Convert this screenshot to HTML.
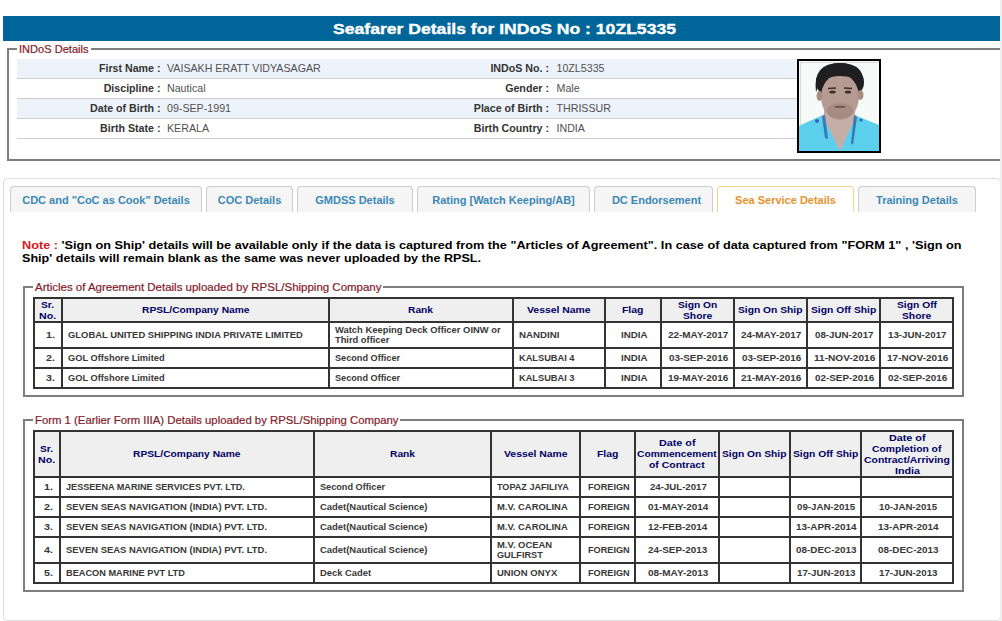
<!DOCTYPE html>
<html><head><meta charset="utf-8"><title>Seafarer Details</title>
<style>
html,body{margin:0;padding:0;background:#fff;}
body{width:1002px;height:621px;overflow:hidden;position:relative;font-family:"Liberation Sans", sans-serif;}
.a{position:absolute;}
.t{position:absolute;white-space:nowrap;transform-origin:0 0;}
</style></head><body>
<div class="a" style="left:3px;top:16px;width:997px;height:25px;background:#006699;"></div><div class="a" style="left:7px;top:48px;width:1000px;height:113px;border:2px solid #7d7d7d;box-sizing:border-box;"></div><div class="a" style="left:17px;top:46px;width:74px;height:6px;background:#fff;"></div><div class="a" style="left:17px;top:59px;width:780px;height:19px;background:#eef3fb;"></div><div class="a" style="left:17px;top:78px;width:780px;height:1px;background:#cdcdcd;"></div><div class="a" style="left:17px;top:98px;width:780px;height:1px;background:#cdcdcd;"></div><div class="a" style="left:17px;top:99px;width:780px;height:19px;background:#eef3fb;"></div><div class="a" style="left:17px;top:118px;width:780px;height:1px;background:#cdcdcd;"></div><div class="a" style="left:17px;top:138px;width:780px;height:1px;background:#cdcdcd;"></div><svg class="a" style="left:797px;top:59px" width="84" height="94" viewBox="0 0 84 94">
<rect x="0" y="0" width="84" height="94" fill="#000"/>
<rect x="2" y="2" width="80" height="90" fill="#f6fbf9"/>
<rect x="3" y="3" width="1" height="88" fill="#d5dcda"/>
<rect x="3" y="3" width="78" height="1" fill="#d5dcda"/>
<path d="M2 92 L2 67 Q12 62 24 57 L28 55 L57 55 L60 57 Q72 62 82 66 L82 92 Z" fill="#5ccfec"/>
<path d="M27 42 L58 42 L58 60 L43 92 L27 60 Z" fill="#c4aea7"/>
<ellipse cx="43" cy="23" rx="24" ry="19" fill="#1f1f22"/>
<ellipse cx="43" cy="38" rx="19" ry="23" fill="#b59b91"/>
<ellipse cx="22.5" cy="37" rx="3" ry="5" fill="#a88c82"/>
<ellipse cx="63.5" cy="36" rx="3" ry="5" fill="#a88c82"/>
<ellipse cx="43" cy="52" rx="13" ry="8" fill="#8a6f67" opacity="0.35"/>
<path d="M19 33 Q15 4 43 4 Q70 4 66 30 Q61 17 43 17 Q25 17 19 33 Z" fill="#1f1f22"/>
<path d="M25 57 L28 56 L31 80 L28 79 Z" fill="#1b3f9a" opacity="0.6"/>
<path d="M57 56 L60 58 L56 86 L54 84 Z" fill="#1b3f9a" opacity="0.6"/>
<circle cx="20" cy="62" r="2" fill="#2d49b0" opacity="0.8"/>
<circle cx="64" cy="61" r="1.6" fill="#2d49b0" opacity="0.8"/>
<ellipse cx="35.5" cy="33" rx="3.2" ry="1.5" fill="#3d2f2c"/>
<ellipse cx="51" cy="33" rx="3.2" ry="1.5" fill="#3d2f2c"/>
<path d="M31 29.5 L39 29 M47 29 L55 29.5" stroke="#3d2f2c" stroke-width="1.3"/>
<rect x="38" y="47" width="10" height="1.6" fill="#6a4d47"/>
</svg><div class="a" style="left:3px;top:178px;width:998px;height:443px;border:1px solid #dddddd;border-radius:4px;box-sizing:border-box;"></div><div class="a" style="left:10px;top:186px;width:192px;height:26px;background:#f5f5f5;border:1px solid #cccccc;border-bottom:none;border-radius:4px 4px 0 0;box-sizing:border-box;"></div><div class="a" style="left:206px;top:186px;width:87px;height:26px;background:#f5f5f5;border:1px solid #cccccc;border-bottom:none;border-radius:4px 4px 0 0;box-sizing:border-box;"></div><div class="a" style="left:297px;top:186px;width:116px;height:26px;background:#f5f5f5;border:1px solid #cccccc;border-bottom:none;border-radius:4px 4px 0 0;box-sizing:border-box;"></div><div class="a" style="left:417px;top:186px;width:173px;height:26px;background:#f5f5f5;border:1px solid #cccccc;border-bottom:none;border-radius:4px 4px 0 0;box-sizing:border-box;"></div><div class="a" style="left:594px;top:186px;width:119px;height:26px;background:#f5f5f5;border:1px solid #cccccc;border-bottom:none;border-radius:4px 4px 0 0;box-sizing:border-box;"></div><div class="a" style="left:717px;top:186px;width:137px;height:26px;background:#ffffff;border:1px solid #f0d58a;border-bottom:none;border-radius:4px 4px 0 0;box-sizing:border-box;"></div><div class="a" style="left:858px;top:186px;width:118px;height:26px;background:#f5f5f5;border:1px solid #cccccc;border-bottom:none;border-radius:4px 4px 0 0;box-sizing:border-box;"></div><div class="a" style="left:23px;top:286px;width:941px;height:111px;border:2px solid #7d7d7d;box-sizing:border-box;"></div><div class="a" style="left:33px;top:284px;width:350px;height:6px;background:#fff;"></div><div class="a" style="left:33px;top:297px;width:921px;height:24px;background:#efefef;"></div><div class="a" style="left:33px;top:297px;width:2px;height:92px;background:#333333;"></div><div class="a" style="left:61px;top:297px;width:2px;height:92px;background:#333333;"></div><div class="a" style="left:328px;top:297px;width:2px;height:92px;background:#333333;"></div><div class="a" style="left:512px;top:297px;width:2px;height:92px;background:#333333;"></div><div class="a" style="left:604px;top:297px;width:2px;height:92px;background:#333333;"></div><div class="a" style="left:660px;top:297px;width:2px;height:92px;background:#333333;"></div><div class="a" style="left:733px;top:297px;width:2px;height:92px;background:#333333;"></div><div class="a" style="left:806px;top:297px;width:2px;height:92px;background:#333333;"></div><div class="a" style="left:879px;top:297px;width:2px;height:92px;background:#333333;"></div><div class="a" style="left:952px;top:297px;width:2px;height:92px;background:#333333;"></div><div class="a" style="left:33px;top:297px;width:921px;height:2px;background:#333333;"></div><div class="a" style="left:33px;top:321px;width:921px;height:2px;background:#333333;"></div><div class="a" style="left:33px;top:347px;width:921px;height:2px;background:#333333;"></div><div class="a" style="left:33px;top:367px;width:921px;height:2px;background:#333333;"></div><div class="a" style="left:33px;top:387px;width:921px;height:2px;background:#333333;"></div><div class="a" style="left:23px;top:419px;width:941px;height:173px;border:2px solid #7d7d7d;box-sizing:border-box;"></div><div class="a" style="left:33px;top:417px;width:367px;height:6px;background:#fff;"></div><div class="a" style="left:33px;top:430px;width:921px;height:46px;background:#efefef;"></div><div class="a" style="left:33px;top:430px;width:2px;height:154px;background:#333333;"></div><div class="a" style="left:59px;top:430px;width:2px;height:154px;background:#333333;"></div><div class="a" style="left:313px;top:430px;width:2px;height:154px;background:#333333;"></div><div class="a" style="left:490px;top:430px;width:2px;height:154px;background:#333333;"></div><div class="a" style="left:579px;top:430px;width:2px;height:154px;background:#333333;"></div><div class="a" style="left:634px;top:430px;width:2px;height:154px;background:#333333;"></div><div class="a" style="left:718px;top:430px;width:2px;height:154px;background:#333333;"></div><div class="a" style="left:789px;top:430px;width:2px;height:154px;background:#333333;"></div><div class="a" style="left:860px;top:430px;width:2px;height:154px;background:#333333;"></div><div class="a" style="left:952px;top:430px;width:2px;height:154px;background:#333333;"></div><div class="a" style="left:33px;top:430px;width:921px;height:2px;background:#333333;"></div><div class="a" style="left:33px;top:476px;width:921px;height:2px;background:#333333;"></div><div class="a" style="left:33px;top:496px;width:921px;height:2px;background:#333333;"></div><div class="a" style="left:33px;top:516px;width:921px;height:2px;background:#333333;"></div><div class="a" style="left:33px;top:536px;width:921px;height:2px;background:#333333;"></div><div class="a" style="left:33px;top:562px;width:921px;height:2px;background:#333333;"></div><div class="a" style="left:33px;top:582px;width:921px;height:2px;background:#333333;"></div><div class="a" style="left:1000px;top:0px;width:2px;height:621px;background:#efefef;"></div>
<div class="t" style="left:333.00px;top:20.80px;font-size:15px;line-height:15px;font-weight:bold;color:#fff;transform:scaleX(1.1722);"><span style="-webkit-text-stroke:0.35px #fff">Seafarer Details for INDoS No : 10ZL5335</span></div><div class="t" style="left:19.00px;top:44.29px;font-size:11px;line-height:11px;font-weight:normal;color:#851a2b;transform:scaleX(1.0061);"><span style="-webkit-text-stroke:0.2px #851a2b">INDoS Details</span></div><div class="t" style="left:98.91px;top:62.97px;font-size:10.67px;line-height:10.67px;font-weight:bold;color:#333;">First Name :</div><div class="t" style="left:167.00px;top:62.97px;font-size:10.67px;line-height:10.67px;font-weight:normal;color:#505050;">VAISAKH ERATT VIDYASAGAR</div><div class="t" style="left:490.39px;top:62.97px;font-size:10.67px;line-height:10.67px;font-weight:bold;color:#333;">INDoS No. :</div><div class="t" style="left:556.50px;top:62.97px;font-size:10.67px;line-height:10.67px;font-weight:normal;color:#505050;">10ZL5335</div><div class="t" style="left:103.64px;top:82.97px;font-size:10.67px;line-height:10.67px;font-weight:bold;color:#333;">Discipline :</div><div class="t" style="left:167.00px;top:82.97px;font-size:10.67px;line-height:10.67px;font-weight:normal;color:#505050;">Nautical</div><div class="t" style="left:505.17px;top:82.97px;font-size:10.67px;line-height:10.67px;font-weight:bold;color:#333;">Gender :</div><div class="t" style="left:556.50px;top:82.97px;font-size:10.67px;line-height:10.67px;font-weight:normal;color:#505050;">Male</div><div class="t" style="left:90.05px;top:102.97px;font-size:10.67px;line-height:10.67px;font-weight:bold;color:#333;">Date of Birth :</div><div class="t" style="left:167.00px;top:102.97px;font-size:10.67px;line-height:10.67px;font-weight:normal;color:#505050;">09-SEP-1991</div><div class="t" style="left:473.80px;top:102.97px;font-size:10.67px;line-height:10.67px;font-weight:bold;color:#333;">Place of Birth :</div><div class="t" style="left:556.50px;top:102.97px;font-size:10.67px;line-height:10.67px;font-weight:normal;color:#505050;">THRISSUR</div><div class="t" style="left:100.11px;top:122.97px;font-size:10.67px;line-height:10.67px;font-weight:bold;color:#333;">Birth State :</div><div class="t" style="left:167.00px;top:122.97px;font-size:10.67px;line-height:10.67px;font-weight:normal;color:#505050;">KERALA</div><div class="t" style="left:473.81px;top:122.97px;font-size:10.67px;line-height:10.67px;font-weight:bold;color:#333;">Birth Country :</div><div class="t" style="left:556.50px;top:122.97px;font-size:10.67px;line-height:10.67px;font-weight:normal;color:#505050;">INDIA</div><div class="t" style="left:22.24px;top:194.69px;font-size:11px;line-height:11px;font-weight:bold;color:#3b88b8;">CDC and "CoC as Cook" Details</div><div class="t" style="left:217.71px;top:194.69px;font-size:11px;line-height:11px;font-weight:bold;color:#3b88b8;">COC Details</div><div class="t" style="left:315.27px;top:194.69px;font-size:11px;line-height:11px;font-weight:bold;color:#3b88b8;">GMDSS Details</div><div class="t" style="left:432.20px;top:194.69px;font-size:11px;line-height:11px;font-weight:bold;color:#3b88b8;">Rating [Watch Keeping/AB]</div><div class="t" style="left:611.88px;top:194.69px;font-size:11px;line-height:11px;font-weight:bold;color:#3b88b8;">DC Endorsement</div><div class="t" style="left:735.05px;top:194.69px;font-size:11px;line-height:11px;font-weight:bold;color:#e8922e;">Sea Service Details</div><div class="t" style="left:876.04px;top:194.69px;font-size:11px;line-height:11px;font-weight:bold;color:#3b88b8;">Training Details</div><div class="t" style="left:21.50px;top:239.69px;font-size:11px;line-height:11px;font-weight:bold;color:#000;transform:scaleX(1.1537);"><span style="color:#e0141e">Note : </span>'Sign on Ship' details will be available only if the data is captured from the "Articles of Agreement". In case of data captured from "FORM 1" , 'Sign on</div><div class="t" style="left:21.50px;top:253.09px;font-size:11px;line-height:11px;font-weight:bold;color:#000;transform:scaleX(1.1441);">Ship' details will remain blank as the same was never uploaded by the RPSL.</div><div class="t" style="left:34.50px;top:281.89px;font-size:11px;line-height:11px;font-weight:normal;color:#851a2b;transform:scaleX(1.0436);"><span style="-webkit-text-stroke:0.2px #851a2b">Articles of Agreement Details uploaded by RPSL/Shipping Company</span></div><div class="t" style="left:41.47px;top:300.58px;font-size:9px;line-height:9px;font-weight:bold;color:#000066;transform:scaleX(1.1338);">Sr.</div><div class="t" style="left:39.43px;top:311.58px;font-size:9px;line-height:9px;font-weight:bold;color:#000066;transform:scaleX(1.1815);">No.</div><div class="t" style="left:141.72px;top:306.08px;font-size:9px;line-height:9px;font-weight:bold;color:#000066;transform:scaleX(1.1379);">RPSL/Company Name</div><div class="t" style="left:408.48px;top:306.08px;font-size:9px;line-height:9px;font-weight:bold;color:#000066;transform:scaleX(1.1376);">Rank</div><div class="t" style="left:527.20px;top:306.08px;font-size:9px;line-height:9px;font-weight:bold;color:#000066;transform:scaleX(1.1554);">Vessel Name</div><div class="t" style="left:622.28px;top:306.08px;font-size:9px;line-height:9px;font-weight:bold;color:#000066;transform:scaleX(1.1579);">Flag</div><div class="t" style="left:677.89px;top:300.58px;font-size:9px;line-height:9px;font-weight:bold;color:#000066;transform:scaleX(1.1370);">Sign On</div><div class="t" style="left:682.94px;top:311.58px;font-size:9px;line-height:9px;font-weight:bold;color:#000066;transform:scaleX(1.1413);">Shore</div><div class="t" style="left:738.29px;top:306.08px;font-size:9px;line-height:9px;font-weight:bold;color:#000066;transform:scaleX(1.1402);">Sign On Ship</div><div class="t" style="left:810.91px;top:306.08px;font-size:9px;line-height:9px;font-weight:bold;color:#000066;transform:scaleX(1.1437);">Sign Off Ship</div><div class="t" style="left:896.50px;top:300.58px;font-size:9px;line-height:9px;font-weight:bold;color:#000066;transform:scaleX(1.1429);">Sign Off</div><div class="t" style="left:901.94px;top:311.58px;font-size:9px;line-height:9px;font-weight:bold;color:#000066;transform:scaleX(1.1413);">Shore</div><div class="t" style="left:46.05px;top:330.60px;font-size:8.5px;line-height:8.5px;font-weight:bold;color:#383838;transform:scaleX(1.2622);">1.</div><div class="t" style="left:68.00px;top:330.60px;font-size:8.5px;line-height:8.5px;font-weight:bold;color:#383838;transform:scaleX(1.1068);">GLOBAL UNITED SHIPPING INDIA PRIVATE LIMITED</div><div class="t" style="left:335.00px;top:325.60px;font-size:8.5px;line-height:8.5px;font-weight:bold;color:#383838;transform:scaleX(1.1054);">Watch Keeping Deck Officer OINW or</div><div class="t" style="left:335.00px;top:335.60px;font-size:8.5px;line-height:8.5px;font-weight:bold;color:#383838;transform:scaleX(1.0953);">Third officer</div><div class="t" style="left:519.00px;top:330.60px;font-size:8.5px;line-height:8.5px;font-weight:bold;color:#383838;transform:scaleX(1.1414);">NANDINI</div><div class="t" style="left:620.75px;top:330.60px;font-size:8.5px;line-height:8.5px;font-weight:bold;color:#383838;transform:scaleX(1.1453);">INDIA</div><div class="t" style="left:668.32px;top:330.60px;font-size:8.5px;line-height:8.5px;font-weight:bold;color:#383838;transform:scaleX(1.1683);">22-MAY-2017</div><div class="t" style="left:741.32px;top:330.60px;font-size:8.5px;line-height:8.5px;font-weight:bold;color:#383838;transform:scaleX(1.1683);">24-MAY-2017</div><div class="t" style="left:815.27px;top:330.60px;font-size:8.5px;line-height:8.5px;font-weight:bold;color:#383838;transform:scaleX(1.1457);">08-JUN-2017</div><div class="t" style="left:888.27px;top:330.60px;font-size:8.5px;line-height:8.5px;font-weight:bold;color:#383838;transform:scaleX(1.1457);">13-JUN-2017</div><div class="t" style="left:46.05px;top:353.60px;font-size:8.5px;line-height:8.5px;font-weight:bold;color:#383838;transform:scaleX(1.2622);">2.</div><div class="t" style="left:68.00px;top:353.60px;font-size:8.5px;line-height:8.5px;font-weight:bold;color:#383838;transform:scaleX(1.0895);">GOL Offshore Limited</div><div class="t" style="left:335.00px;top:353.60px;font-size:8.5px;line-height:8.5px;font-weight:bold;color:#383838;transform:scaleX(1.0756);">Second Officer</div><div class="t" style="left:519.00px;top:353.60px;font-size:8.5px;line-height:8.5px;font-weight:bold;color:#383838;transform:scaleX(1.0881);">KALSUBAI 4</div><div class="t" style="left:620.75px;top:353.60px;font-size:8.5px;line-height:8.5px;font-weight:bold;color:#383838;transform:scaleX(1.1453);">INDIA</div><div class="t" style="left:668.86px;top:353.60px;font-size:8.5px;line-height:8.5px;font-weight:bold;color:#383838;transform:scaleX(1.1613);">03-SEP-2016</div><div class="t" style="left:741.86px;top:353.60px;font-size:8.5px;line-height:8.5px;font-weight:bold;color:#383838;transform:scaleX(1.1613);">03-SEP-2016</div><div class="t" style="left:813.85px;top:353.60px;font-size:8.5px;line-height:8.5px;font-weight:bold;color:#383838;transform:scaleX(1.1898);">11-NOV-2016</div><div class="t" style="left:886.85px;top:353.60px;font-size:8.5px;line-height:8.5px;font-weight:bold;color:#383838;transform:scaleX(1.1791);">17-NOV-2016</div><div class="t" style="left:46.05px;top:373.60px;font-size:8.5px;line-height:8.5px;font-weight:bold;color:#383838;transform:scaleX(1.2622);">3.</div><div class="t" style="left:68.00px;top:373.60px;font-size:8.5px;line-height:8.5px;font-weight:bold;color:#383838;transform:scaleX(1.0895);">GOL Offshore Limited</div><div class="t" style="left:335.00px;top:373.60px;font-size:8.5px;line-height:8.5px;font-weight:bold;color:#383838;transform:scaleX(1.0756);">Second Officer</div><div class="t" style="left:519.00px;top:373.60px;font-size:8.5px;line-height:8.5px;font-weight:bold;color:#383838;transform:scaleX(1.0881);">KALSUBAI 3</div><div class="t" style="left:620.75px;top:373.60px;font-size:8.5px;line-height:8.5px;font-weight:bold;color:#383838;transform:scaleX(1.1453);">INDIA</div><div class="t" style="left:668.32px;top:373.60px;font-size:8.5px;line-height:8.5px;font-weight:bold;color:#383838;transform:scaleX(1.1683);">19-MAY-2016</div><div class="t" style="left:741.32px;top:373.60px;font-size:8.5px;line-height:8.5px;font-weight:bold;color:#383838;transform:scaleX(1.1683);">21-MAY-2016</div><div class="t" style="left:814.86px;top:373.60px;font-size:8.5px;line-height:8.5px;font-weight:bold;color:#383838;transform:scaleX(1.1613);">02-SEP-2016</div><div class="t" style="left:887.86px;top:373.60px;font-size:8.5px;line-height:8.5px;font-weight:bold;color:#383838;transform:scaleX(1.1613);">02-SEP-2016</div><div class="t" style="left:34.50px;top:414.89px;font-size:11px;line-height:11px;font-weight:normal;color:#851a2b;transform:scaleX(1.0304);"><span style="-webkit-text-stroke:0.2px #851a2b">Form 1 (Earlier Form IIIA) Details uploaded by RPSL/Shipping Company</span></div><div class="t" style="left:40.47px;top:444.58px;font-size:9px;line-height:9px;font-weight:bold;color:#000066;transform:scaleX(1.1338);">Sr.</div><div class="t" style="left:38.43px;top:455.58px;font-size:9px;line-height:9px;font-weight:bold;color:#000066;transform:scaleX(1.1815);">No.</div><div class="t" style="left:133.22px;top:450.08px;font-size:9px;line-height:9px;font-weight:bold;color:#000066;transform:scaleX(1.1379);">RPSL/Company Name</div><div class="t" style="left:389.98px;top:450.08px;font-size:9px;line-height:9px;font-weight:bold;color:#000066;transform:scaleX(1.1376);">Rank</div><div class="t" style="left:503.70px;top:450.08px;font-size:9px;line-height:9px;font-weight:bold;color:#000066;transform:scaleX(1.1554);">Vessel Name</div><div class="t" style="left:596.78px;top:450.08px;font-size:9px;line-height:9px;font-weight:bold;color:#000066;transform:scaleX(1.1579);">Flag</div><div class="t" style="left:658.76px;top:439.08px;font-size:9px;line-height:9px;font-weight:bold;color:#000066;transform:scaleX(1.1957);">Date of</div><div class="t" style="left:637.11px;top:450.08px;font-size:9px;line-height:9px;font-weight:bold;color:#000066;transform:scaleX(1.1391);">Commencement</div><div class="t" style="left:649.19px;top:461.08px;font-size:9px;line-height:9px;font-weight:bold;color:#000066;transform:scaleX(1.1586);">of Contract</div><div class="t" style="left:722.29px;top:450.08px;font-size:9px;line-height:9px;font-weight:bold;color:#000066;transform:scaleX(1.1402);">Sign On Ship</div><div class="t" style="left:792.91px;top:450.08px;font-size:9px;line-height:9px;font-weight:bold;color:#000066;transform:scaleX(1.1437);">Sign Off Ship</div><div class="t" style="left:888.76px;top:433.58px;font-size:9px;line-height:9px;font-weight:bold;color:#000066;transform:scaleX(1.1957);">Date of</div><div class="t" style="left:872.32px;top:444.58px;font-size:9px;line-height:9px;font-weight:bold;color:#000066;transform:scaleX(1.1463);">Completion of</div><div class="t" style="left:864.09px;top:455.58px;font-size:9px;line-height:9px;font-weight:bold;color:#000066;transform:scaleX(1.1595);">Contract/Arriving</div><div class="t" style="left:894.54px;top:466.58px;font-size:9px;line-height:9px;font-weight:bold;color:#000066;transform:scaleX(1.1862);">India</div><div class="t" style="left:44.05px;top:482.60px;font-size:8.5px;line-height:8.5px;font-weight:bold;color:#383838;transform:scaleX(1.2622);">1.</div><div class="t" style="left:66.00px;top:482.60px;font-size:8.5px;line-height:8.5px;font-weight:bold;color:#383838;transform:scaleX(1.0704);">JESSEENA MARINE SERVICES PVT. LTD.</div><div class="t" style="left:320.00px;top:482.60px;font-size:8.5px;line-height:8.5px;font-weight:bold;color:#383838;transform:scaleX(1.0756);">Second Officer</div><div class="t" style="left:497.00px;top:482.60px;font-size:8.5px;line-height:8.5px;font-weight:bold;color:#383838;transform:scaleX(1.0660);">TOPAZ JAFILIYA</div><div class="t" style="left:587.63px;top:482.60px;font-size:8.5px;line-height:8.5px;font-weight:bold;color:#383838;transform:scaleX(1.0778);">FOREIGN</div><div class="t" style="left:649.60px;top:482.60px;font-size:8.5px;line-height:8.5px;font-weight:bold;color:#383838;transform:scaleX(1.1337);">24-JUL-2017</div><div class="t" style="left:44.05px;top:502.60px;font-size:8.5px;line-height:8.5px;font-weight:bold;color:#383838;transform:scaleX(1.2622);">2.</div><div class="t" style="left:66.00px;top:502.60px;font-size:8.5px;line-height:8.5px;font-weight:bold;color:#383838;transform:scaleX(1.1115);">SEVEN SEAS NAVIGATION (INDIA) PVT. LTD.</div><div class="t" style="left:320.00px;top:502.60px;font-size:8.5px;line-height:8.5px;font-weight:bold;color:#383838;transform:scaleX(1.1090);">Cadet(Nautical Science)</div><div class="t" style="left:497.00px;top:502.60px;font-size:8.5px;line-height:8.5px;font-weight:bold;color:#383838;transform:scaleX(1.1058);">M.V. CAROLINA</div><div class="t" style="left:587.63px;top:502.60px;font-size:8.5px;line-height:8.5px;font-weight:bold;color:#383838;transform:scaleX(1.0778);">FOREIGN</div><div class="t" style="left:647.82px;top:502.60px;font-size:8.5px;line-height:8.5px;font-weight:bold;color:#383838;transform:scaleX(1.1683);">01-MAY-2014</div><div class="t" style="left:797.43px;top:502.60px;font-size:8.5px;line-height:8.5px;font-weight:bold;color:#383838;transform:scaleX(1.1394);">09-JAN-2015</div><div class="t" style="left:878.93px;top:502.60px;font-size:8.5px;line-height:8.5px;font-weight:bold;color:#383838;transform:scaleX(1.1394);">10-JAN-2015</div><div class="t" style="left:44.05px;top:522.60px;font-size:8.5px;line-height:8.5px;font-weight:bold;color:#383838;transform:scaleX(1.2622);">3.</div><div class="t" style="left:66.00px;top:522.60px;font-size:8.5px;line-height:8.5px;font-weight:bold;color:#383838;transform:scaleX(1.1115);">SEVEN SEAS NAVIGATION (INDIA) PVT. LTD.</div><div class="t" style="left:320.00px;top:522.60px;font-size:8.5px;line-height:8.5px;font-weight:bold;color:#383838;transform:scaleX(1.1090);">Cadet(Nautical Science)</div><div class="t" style="left:497.00px;top:522.60px;font-size:8.5px;line-height:8.5px;font-weight:bold;color:#383838;transform:scaleX(1.1058);">M.V. CAROLINA</div><div class="t" style="left:587.63px;top:522.60px;font-size:8.5px;line-height:8.5px;font-weight:bold;color:#383838;transform:scaleX(1.0778);">FOREIGN</div><div class="t" style="left:648.32px;top:522.60px;font-size:8.5px;line-height:8.5px;font-weight:bold;color:#383838;transform:scaleX(1.1632);">12-FEB-2014</div><div class="t" style="left:796.20px;top:522.60px;font-size:8.5px;line-height:8.5px;font-weight:bold;color:#383838;transform:scaleX(1.1657);">13-APR-2014</div><div class="t" style="left:877.70px;top:522.60px;font-size:8.5px;line-height:8.5px;font-weight:bold;color:#383838;transform:scaleX(1.1657);">13-APR-2014</div><div class="t" style="left:44.05px;top:545.60px;font-size:8.5px;line-height:8.5px;font-weight:bold;color:#383838;transform:scaleX(1.2622);">4.</div><div class="t" style="left:66.00px;top:545.60px;font-size:8.5px;line-height:8.5px;font-weight:bold;color:#383838;transform:scaleX(1.1115);">SEVEN SEAS NAVIGATION (INDIA) PVT. LTD.</div><div class="t" style="left:320.00px;top:545.60px;font-size:8.5px;line-height:8.5px;font-weight:bold;color:#383838;transform:scaleX(1.1090);">Cadet(Nautical Science)</div><div class="t" style="left:497.00px;top:540.60px;font-size:8.5px;line-height:8.5px;font-weight:bold;color:#383838;transform:scaleX(1.1079);">M.V. OCEAN</div><div class="t" style="left:497.00px;top:550.60px;font-size:8.5px;line-height:8.5px;font-weight:bold;color:#383838;transform:scaleX(1.0763);">GULFIRST</div><div class="t" style="left:587.63px;top:545.60px;font-size:8.5px;line-height:8.5px;font-weight:bold;color:#383838;transform:scaleX(1.0778);">FOREIGN</div><div class="t" style="left:648.36px;top:545.60px;font-size:8.5px;line-height:8.5px;font-weight:bold;color:#383838;transform:scaleX(1.1613);">24-SEP-2013</div><div class="t" style="left:796.23px;top:545.60px;font-size:8.5px;line-height:8.5px;font-weight:bold;color:#383838;transform:scaleX(1.1644);">08-DEC-2013</div><div class="t" style="left:877.73px;top:545.60px;font-size:8.5px;line-height:8.5px;font-weight:bold;color:#383838;transform:scaleX(1.1644);">08-DEC-2013</div><div class="t" style="left:44.05px;top:568.60px;font-size:8.5px;line-height:8.5px;font-weight:bold;color:#383838;transform:scaleX(1.2622);">5.</div><div class="t" style="left:66.00px;top:568.60px;font-size:8.5px;line-height:8.5px;font-weight:bold;color:#383838;transform:scaleX(1.0820);">BEACON MARINE PVT LTD</div><div class="t" style="left:320.00px;top:568.60px;font-size:8.5px;line-height:8.5px;font-weight:bold;color:#383838;transform:scaleX(1.1019);">Deck Cadet</div><div class="t" style="left:497.00px;top:568.60px;font-size:8.5px;line-height:8.5px;font-weight:bold;color:#383838;transform:scaleX(1.1185);">UNION ONYX</div><div class="t" style="left:587.63px;top:568.60px;font-size:8.5px;line-height:8.5px;font-weight:bold;color:#383838;transform:scaleX(1.0778);">FOREIGN</div><div class="t" style="left:647.82px;top:568.60px;font-size:8.5px;line-height:8.5px;font-weight:bold;color:#383838;transform:scaleX(1.1683);">08-MAY-2013</div><div class="t" style="left:797.27px;top:568.60px;font-size:8.5px;line-height:8.5px;font-weight:bold;color:#383838;transform:scaleX(1.1457);">17-JUN-2013</div><div class="t" style="left:878.77px;top:568.60px;font-size:8.5px;line-height:8.5px;font-weight:bold;color:#383838;transform:scaleX(1.1457);">17-JUN-2013</div>
</body></html>
